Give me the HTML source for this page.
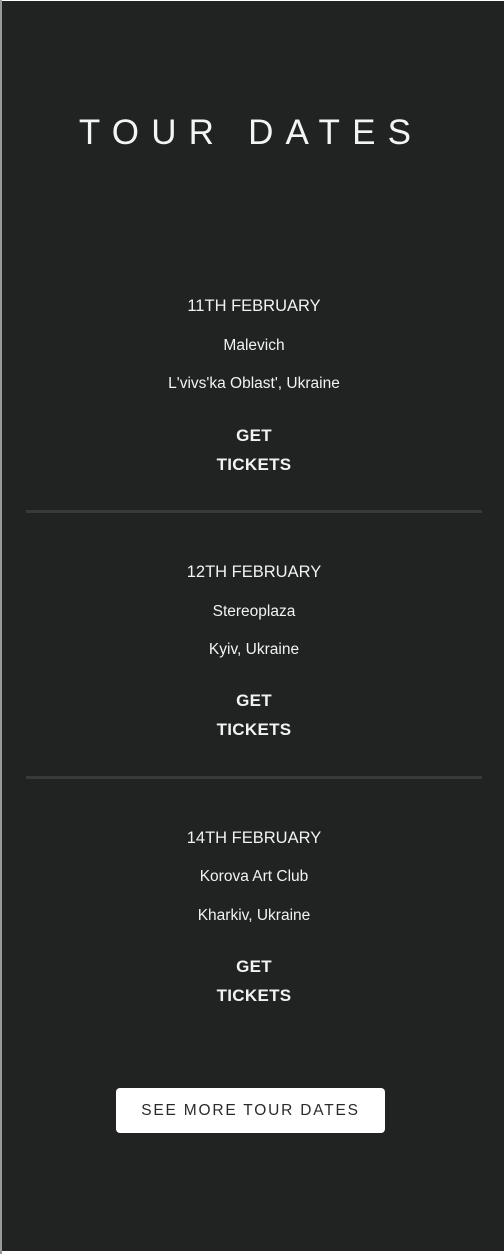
<!DOCTYPE html>
<html><head><style>
*{margin:0;padding:0;box-sizing:border-box}
body{width:504px;height:1254px;background:#fff;position:relative;overflow:hidden;font-family:"Liberation Sans",sans-serif}
.bg{position:absolute;left:2px;top:1px;width:502px;height:1250px;background:#212222}
.lb{position:absolute;left:0;top:0;width:2px;height:1254px;background:#9a9a9a}
.t{position:absolute;left:2px;width:504px;text-align:center;color:#f2f2f2;white-space:nowrap}
.title{top:113px;font-size:35px;font-weight:300;letter-spacing:12.2px;padding-left:12px;color:#f4f4f4;left:-7px}
.d{font-size:16.5px}
.v{font-size:15.5px}
.b{font-size:17px;font-weight:bold;letter-spacing:.3px}
.hr{position:absolute;left:26px;width:456px;height:3px;background:#383939}
.btn{position:absolute;left:116px;top:1088px;width:269px;height:45px;background:#fff;border-radius:4px;color:#2a2a2a;font-size:15.5px;letter-spacing:1.8px;text-align:center;line-height:45px}
</style></head><body>
<div class="lb"></div><div class="bg"></div>
<div class="t title">TOUR DATES</div>

<div class="t d" style="top:297px">11TH FEBRUARY</div>
<div class="t v" style="top:337px">Malevich</div>
<div class="t v" style="top:375px">L'vivs'ka Oblast', Ukraine</div>
<div class="t b" style="top:426px">GET</div>
<div class="t b" style="top:455px">TICKETS</div>
<div class="hr" style="top:510px"></div>

<div class="t d" style="top:563px">12TH FEBRUARY</div>
<div class="t v" style="top:603px">Stereoplaza</div>
<div class="t v" style="top:641px">Kyiv, Ukraine</div>
<div class="t b" style="top:691px">GET</div>
<div class="t b" style="top:720px">TICKETS</div>
<div class="hr" style="top:776px"></div>

<div class="t d" style="top:829px">14TH FEBRUARY</div>
<div class="t v" style="top:868px">Korova Art Club</div>
<div class="t v" style="top:907px">Kharkiv, Ukraine</div>
<div class="t b" style="top:957px">GET</div>
<div class="t b" style="top:986px">TICKETS</div>

<div class="btn">SEE MORE TOUR DATES</div>
</body></html>
